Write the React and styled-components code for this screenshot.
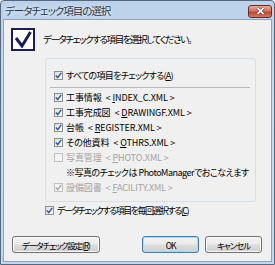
import React from "react"
import styled, { createGlobalStyle } from "styled-components"

const GlobalStyle = createGlobalStyle`
  html, body {
    margin: 0;
    padding: 0;
    background: #ffffff;
  }
  * {
    box-sizing: border-box;
  }
`

const font = `"Noto Sans CJK JP", "Noto Sans", sans-serif`

const Window = styled.div`
  width: 275px;
  height: 265px;
  display: flex;
  flex-direction: column;
  border: 1px solid #56677f;
  border-radius: 4px 4px 0 0;
  background: linear-gradient(180deg, #bcd2ea 0%, #c9dbee 40%, #c3d6ec 100%);
  font-family: ${font};
  font-feature-settings: "palt" 1;
  color: #000;
  overflow: hidden;
`

const TitleBar = styled.div`
  height: 18px;
  display: flex;
  align-items: center;
  padding-left: 4px;
  flex-shrink: 0;
`

const Title = styled.span`
  font-size: 10.5px;
  color: #2a3646;
  letter-spacing: -1px;
  text-shadow: 0 0 4px rgba(255, 255, 255, 0.9);
`

const CloseButton = styled.div`
  margin-left: auto;
  margin-right: 2px;
  margin-top: 2px;
  width: 24px;
  height: 13px;
  border: 1px solid #6a2a22;
  border-radius: 3px;
  background: linear-gradient(180deg, #e9a99c 0%, #d47563 45%, #c04532 55%, #d3775f 100%);
  display: flex;
  align-items: center;
  justify-content: center;
`

const Client = styled.div`
  flex: 1;
  margin: 0 2px 2px 2px;
  border: 1px solid #8ca2bd;
  background: #f0f0f0;
  display: flex;
  flex-direction: column;
`

const Header = styled.div`
  display: flex;
  align-items: center;
  gap: 8px;
  padding: 7px 0 0 7px;
  height: 31px;
`

const BigBox = styled.div`
  width: 24px;
  height: 23px;
  border: 2px solid #1d1d55;
  background: #ffffff;
  display: flex;
  align-items: center;
  justify-content: center;
`

const HeaderText = styled.span`
  font-size: 9.5px;
  letter-spacing: -1.4px;
`

const Group = styled.div`
  margin: 7px 0 0 41px;
  width: 211px;
  height: 144px;
  border: 1px solid #d5dfe5;
  border-radius: 3px;
  padding: 9px 0 0 8px;
  display: flex;
  flex-direction: column;
`

const Row = styled.label`
  display: flex;
  align-items: center;
  gap: 3px;
  height: ${(p) => p.$height || 15}px;
  padding-left: ${(p) => p.$indent || 0}px;
  font-size: 9px;
  letter-spacing: ${(p) => p.$tight ?? -0.1}px;
  white-space: nowrap;
  color: ${(p) => (p.$disabled ? "#a3a3a3" : "#000")};
`

const Separator = styled.div`
  height: 1px;
  background: #b9b9b9;
  margin: 5px 5px 2px -4px;
`

const Box = styled.span`
  width: 9px;
  height: 9px;
  flex-shrink: 0;
  border: 1px solid ${(p) => (p.$disabled ? "#c0c0c0" : "#8e8f8f")};
  background: ${(p) =>
    p.$disabled ? "#f4f4f4" : "linear-gradient(135deg, #dcdcdc 0%, #f6f6f6 70%, #ffffff 100%)"};
  display: flex;
  align-items: center;
  justify-content: center;
`

const Gap = styled.span`
  display: inline-block;
  width: 4px;
`

const Footer = styled.div`
  margin-left: 41px;
`

const Buttons = styled.div`
  display: flex;
  margin-top: 18px;
  padding: 0 8px;
  gap: 6px;
`

const Button = styled.div`
  width: ${(p) => p.$width}px;
  height: 17px;
  margin-right: ${(p) => p.$push || 0}px;
  border: 1px solid ${(p) => (p.$default ? "#3c7fb1" : "#707070")};
  border-radius: 3px;
  background: linear-gradient(180deg, #f2f2f2 0%, #ebebeb 48%, #dddddd 52%, #cfcfcf 100%);
  box-shadow: inset 0 0 0 1px ${(p) => (p.$default ? "#a8dcf5" : "#fbfbfb")};
  display: flex;
  align-items: center;
  justify-content: center;
  font-size: 8.5px;
  letter-spacing: -1.1px;
`

const Check = ({ grey }) => (
  <svg width="7" height="7" viewBox="0 0 7 7">
    <path
      d="M0.8 3.4 L2.8 5.6 L6.2 0.9"
      fill="none"
      stroke={grey ? "#a8a8a8" : "#2f58a8"}
      strokeWidth="1.5"
    />
  </svg>
)

const CheckBox = ({ checked, disabled }) => (
  <Box $disabled={disabled}>{checked && <Check grey={disabled} />}</Box>
)

const items = [
  { name: "工事情報", key: "I", rest: "NDEX_C.XML", checked: true },
  { name: "工事完成図", key: "D", rest: "RAWINGF.XML", checked: true },
  { name: "台帳", key: "R", rest: "EGISTER.XML", checked: true },
  { name: "その他資料", key: "O", rest: "THRS.XML", checked: true },
  { name: "写真管理", key: "P", rest: "HOTO.XML", checked: false, disabled: true },
]

export default function App() {
  return (
    <>
      <GlobalStyle />
      <Window>
        <TitleBar>
          <Title>データチェック項目の選択</Title>
          <CloseButton>
            <svg width="9" height="8" viewBox="0 0 9 8">
              <path d="M1.5 1 L7.5 7 M7.5 1 L1.5 7" stroke="#3a1a16" strokeWidth="3" />
              <path d="M1.5 1 L7.5 7 M7.5 1 L1.5 7" stroke="#ffffff" strokeWidth="1.8" />
            </svg>
          </CloseButton>
        </TitleBar>
        <Client>
          <Header>
            <BigBox>
              <svg width="18" height="17" viewBox="0 0 18 17">
                <path d="M2 7 L8 15 L16.5 1" fill="none" stroke="#1d1d55" strokeWidth="3" />
              </svg>
            </BigBox>
            <HeaderText>データチェックする項目を選択してください。</HeaderText>
          </Header>
          <Group>
            <Row $height={14} $tight={-0.7}>
              <CheckBox checked />
              <span>
                すべての項目をチェックする(<u>A</u>)
              </span>
            </Row>
            <Separator />
            {items.map((it) => (
              <Row key={it.name} $disabled={it.disabled}>
                <CheckBox checked={it.checked} disabled={it.disabled} />
                <span>
                  {it.name}
                  <Gap />
                  {"< "}
                  <u>{it.key}</u>
                  {it.rest}
                  {" >"}
                </span>
              </Row>
            ))}
            <Row $indent={12} $tight={-0.5}>
              ※写真のチェックは PhotoManagerでおこなえます
            </Row>
            <Row $disabled>
              <CheckBox checked disabled />
              <span>
                設備図書
                <Gap />
                {"< "}
                <u>F</u>ACILITY.XML{" >"}
              </span>
            </Row>
          </Group>
          <Footer>
            <Row $height={16} $tight={-1.5}>
              <CheckBox checked />
              <span>
                データチェックする項目を毎回選択する(<u>C</u>)
              </span>
            </Row>
          </Footer>
          <Buttons>
            <Button $width={88} $push={36}>
              データチェック設定(<u>R</u>)
            </Button>
            <Button $width={57} $default>
              OK
            </Button>
            <Button $width={57}>キャンセル</Button>
          </Buttons>
        </Client>
      </Window>
    </>
  )
}
